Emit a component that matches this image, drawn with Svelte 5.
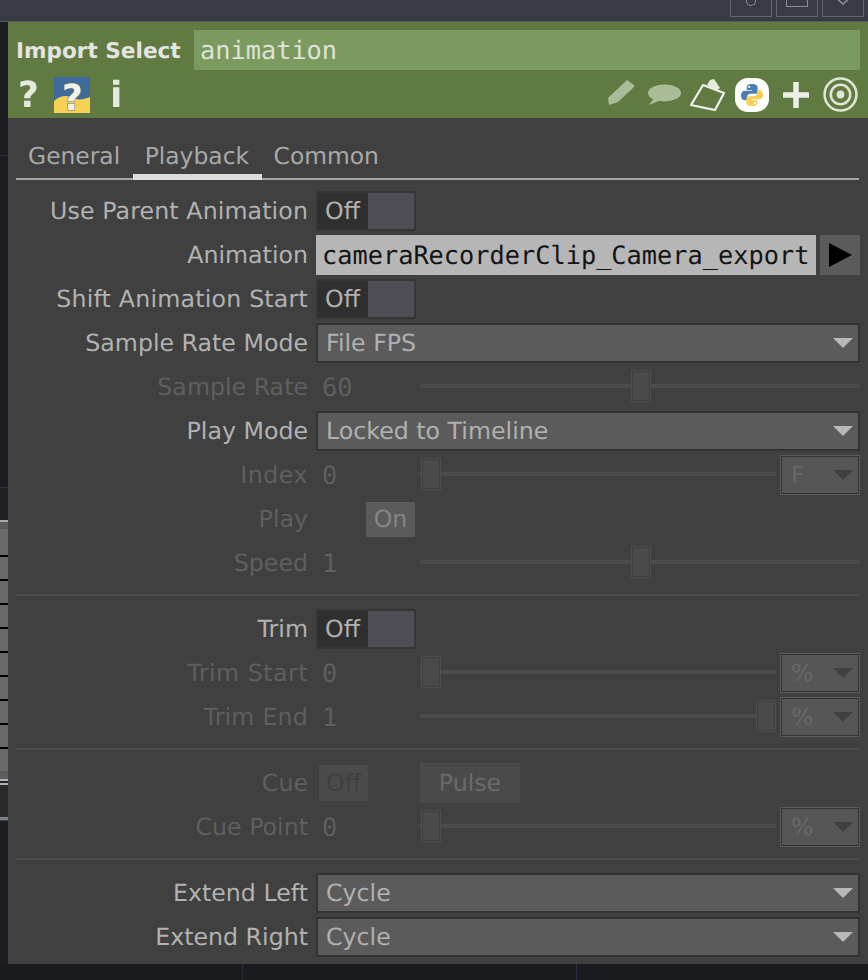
<script>
  const stripRows = Array.from({ length: 10 });
</script>

<div class="page">
  <div class="topbar">
    <div class="winbtn"><span class="glyph-o"></span></div>
    <div class="winbtn"><span class="glyph-sq"></span></div>
    <div class="winbtn">
      <svg width="24" height="12" viewBox="0 0 24 12"><path d="M3 0 L12 8 L21 0" fill="none" stroke="#8b8d99" stroke-width="1.6"/></svg>
    </div>
  </div>

  <div class="middle">
    <div class="strip">
      <div class="strip-dark top"></div>
      <div class="strip-line"></div>
      <div class="strip-dark upper"></div>
      <div class="strip-line"></div>
      <div class="strip-dark lower"></div>
      <div class="strip-light"></div>
      <div class="strip-cap"></div>
      {#each stripRows as _, i}
        <div class="strip-row" class:first={i === 0} class:last={i === 9}></div>
      {/each}
      <div class="strip-cap2"></div>
      <div class="strip-hi"></div>
      <div class="strip-gap"></div>
      <div class="strip-hi"></div>
      <div class="strip-panel"></div>
      <div class="strip-hi2"></div>
      <div class="strip-blue"></div>
    </div>

    <div class="panel">
      <header class="head">
        <div class="title-row">
          <span class="title">Import Select</span>
          <div class="name">animation</div>
        </div>
        <div class="icon-row">
          <div class="icons-left">
            <span class="ico-q">?</span>
            <svg class="ico-help" width="36" height="36" viewBox="0 0 36 36">
              <rect width="36" height="36" fill="#3f6b9c"/>
              <path d="M0 24 C6 18 14 18 20 21 S30 22 36 20 V36 H0 Z" fill="#f6d154"/>
              <text x="18.5" y="32.5" text-anchor="middle" class="help-text">?</text>
            </svg>
            <span class="ico-i">i</span>
          </div>
          <div class="icons-right">
            <svg class="soft lift" width="28" height="26" viewBox="0 0 28 26">
              <path d="M20 1 L27 6 L27 8 L11 23 L2 26 L1 19 Z" fill="#a9bb98"/>
            </svg>
            <svg class="soft m11" width="35" height="22" viewBox="0 0 35 22">
              <ellipse cx="18.5" cy="9" rx="16.5" ry="8.5" fill="#aabd98"/>
              <path d="M8 14 L3 21 L15 16 Z" fill="#aabd98"/>
            </svg>
            <svg class="soft m9" width="35" height="33" viewBox="0 0 35 33">
              <path d="M1 27 L13 7 L34 15 L25 32 Z" fill="none" stroke="#f1f3ec" stroke-width="2.2" stroke-linejoin="round"/>
              <path d="M17 7 L20 2 L24 1 L30 10 L26 13 Z" fill="#e6ead9"/>
            </svg>
            <svg class="m10" width="34" height="34" viewBox="0 0 34 34">
              <rect x="0" y="0" width="34" height="34" rx="13" fill="#fff"/>
              <g transform="translate(2.6 2.6) scale(0.85)">
                <path d="M16.8 4 C11 4 10.8 6.5 10.8 8 V11 H17 V12 H8.6 C6 12 4 14 4 17.4 C4 21 6 23 8.4 23 H11 V19.6 C11 17.4 13 15.6 15 15.6 H20.6 C22.4 15.6 23.6 14.2 23.6 12.4 V8 C23.6 6 21.6 4 16.8 4 Z" fill="#4b7fb0"/>
                <path d="M17.2 30 C23 30 23.2 27.5 23.2 26 V23 H17 V22 H25.4 C28 22 30 20 30 16.6 C30 13 28 11 25.6 11 H23 V14.4 C23 16.6 21 18.4 19 18.4 H13.4 C11.6 18.4 10.4 19.8 10.4 21.6 V26 C10.4 28 12.4 30 17.2 30 Z" fill="#f6d154"/>
                <circle cx="13.6" cy="7.4" r="1.3" fill="#fff"/>
                <circle cx="20.4" cy="26.6" r="1.3" fill="#fff"/>
              </g>
            </svg>
            <svg class="soft m13" width="28" height="28" viewBox="0 0 28 28">
              <path d="M14 1 V27 M1 14 H27" stroke="#ebefe6" stroke-width="5.5"/>
            </svg>
            <svg class="soft m13" width="35" height="35" viewBox="0 0 36 36">
              <circle cx="18" cy="18" r="16.4" fill="none" stroke="#dfe6d6" stroke-width="2.6"/>
              <circle cx="18" cy="18" r="10" fill="none" stroke="#dfe6d6" stroke-width="2.6"/>
              <circle cx="18" cy="18" r="4" fill="#dfe6d6"/>
            </svg>
          </div>
        </div>
      </header>

      <div class="body">
        <nav class="tabs">
          <span class="tab">General</span>
          <span class="tab active">Playback</span>
          <span class="tab">Common</span>
        </nav>

        <div class="params">
          <div class="row"><span class="lab ls-s">Use Parent Animation</span><div class="toggle"><span class="t-off">Off</span><span class="t-on"></span></div></div>
          <div class="row"><span class="lab">Animation</span>
            <div class="field-wrap">
              <div class="field">cameraRecorderClip_Camera_export</div>
              <div class="playbtn"><svg width="23" height="24" viewBox="0 0 23 24"><path d="M0 0 L23 12 L0 24 Z" fill="#000"/></svg></div>
            </div>
          </div>
          <div class="row"><span class="lab ls-m">Shift Animation Start</span><div class="toggle"><span class="t-off">Off</span><span class="t-on"></span></div></div>
          <div class="row"><span class="lab">Sample Rate Mode</span><div class="menu"><span>File FPS</span><i class="arrow"></i></div></div>
          <div class="row off"><span class="lab">Sample Rate</span>
            <div class="num-row"><span class="val">60</span><div class="slider"><b class="thumb mid"></b></div></div>
          </div>
          <div class="row"><span class="lab">Play Mode</span><div class="menu"><span>Locked to Timeline</span><i class="arrow"></i></div></div>
          <div class="row off"><span class="lab ls-l">Index</span>
            <div class="num-row"><span class="val">0</span><div class="slider short"><b class="thumb start"></b></div><div class="unit"><span>F</span><i class="arrow dimarrow"></i></div></div>
          </div>
          <div class="row off"><span class="lab">Play</span><div class="onbtn-wrap"><div class="onbtn">On</div></div></div>
          <div class="row off"><span class="lab">Speed</span>
            <div class="num-row"><span class="val">1</span><div class="slider"><b class="thumb mid"></b></div></div>
          </div>

          <div class="sep"></div>

          <div class="row"><span class="lab">Trim</span><div class="toggle"><span class="t-off">Off</span><span class="t-on"></span></div></div>
          <div class="row off"><span class="lab ls-l">Trim Start</span>
            <div class="num-row"><span class="val">0</span><div class="slider short"><b class="thumb start"></b></div><div class="unit"><span>%</span><i class="arrow dimarrow"></i></div></div>
          </div>
          <div class="row off"><span class="lab ls-m">Trim End</span>
            <div class="num-row"><span class="val">1</span><div class="slider short"><b class="thumb end"></b></div><div class="unit"><span>%</span><i class="arrow dimarrow"></i></div></div>
          </div>

          <div class="sep"></div>

          <div class="row off"><span class="lab">Cue</span>
            <div class="cue"><div class="cue-off">Off</div><div class="pulse">Pulse</div></div>
          </div>
          <div class="row off"><span class="lab">Cue Point</span>
            <div class="num-row"><span class="val">0</span><div class="slider short"><b class="thumb start"></b></div><div class="unit"><span>%</span><i class="arrow dimarrow"></i></div></div>
          </div>

          <div class="sep"></div>

          <div class="row"><span class="lab">Extend Left</span><div class="menu"><span>Cycle</span><i class="arrow"></i></div></div>
          <div class="row"><span class="lab">Extend Right</span><div class="menu"><span>Cycle</span><i class="arrow"></i></div></div>
        </div>
      </div>
    </div>
  </div>
  <div class="bottom"><i></i><i class="violet"></i></div>
</div>

<style>
  :global(body) { margin: 0; background: #1a1b1f; }
  .page { width: 868px; height: 980px; overflow: hidden; display: flex; flex-direction: column; font-family: "DejaVu Sans", sans-serif; text-rendering: geometricPrecision; }

  .topbar { height: 21px; flex: none; background: #383a44; border-bottom: 1px solid #55585c; display: flex; justify-content: flex-end; gap: 4px; padding-right: 4px; align-items: flex-end; }
  .winbtn { width: 40px; height: 17px; margin-bottom: 4px; border: 1px solid #63656f; border-top: 0; display: flex; justify-content: center; align-items: flex-end; overflow: hidden; }
  .glyph-o { width: 8px; height: 14px; border: 1.5px solid #8b8d99; border-top: 0; border-radius: 0 0 6px 6px; margin-bottom: 10px; }
  .glyph-sq { width: 20px; height: 12px; border: 1.5px solid #8b8d99; border-top: 0; margin-bottom: 9px; }
  .winbtn svg { margin-bottom: 8px; }

  .middle { display: flex; flex: none; height: 942px; }
  .strip { width: 8px; flex: none; display: flex; flex-direction: column; background: #1c1d21; }
  .strip-dark { flex: none; }
  .strip-dark.top { height: 133px; }
  .strip-dark.upper { height: 331px; }
  .strip-dark.lower { height: 32px; background: #1f2024; }
  .strip-line { height: 1px; flex: none; background: #2e2f34; }
  .strip-light { height: 2px; background: #a9a9ad; flex: none; }
  .strip-cap { height: 7px; background: #5a5a5a; flex: none; }
  .strip-row { height: 22px; flex: none; background: #6a6a6a; border-bottom: 2px solid #000; }
  .strip-row.first { height: 26px; }
  .strip-row.last { border-bottom: 0; }
  .strip-cap2 { height: 8px; flex: none; background: #5c5c5c; }
  .strip-hi { height: 2px; flex: none; background: #b0b0b8; }
  .strip-gap { height: 2px; flex: none; background: #222226; }
  .strip-panel { height: 32px; flex: none; background: #2a2a2c; }
  .strip-hi2 { height: 3px; flex: none; background: #7e7f8c; }
  .strip-blue { height: 1px; flex: none; background: #3a4450; }

  .panel { flex: 1; display: flex; flex-direction: column; background: #404040; border-right: 1px solid #4a4a4a; }

  .head { height: 96px; flex: none; background: #617a42; padding: 8px 8px 0 8px; box-sizing: border-box; margin-right: -1px; }
  .title-row { display: flex; align-items: center; height: 40px; }
  .title { width: 178px; flex: none; font-weight: 700; font-size: 21.6px; color: #e4e4e0; white-space: nowrap; padding-top: 2px; }
  .name { width: 666px; height: 40px; box-sizing: border-box; background: #7b9a60; color: #dde3d5; font: 25.3px/42px "DejaVu Sans Mono", monospace; padding-left: 6px; }
  .icon-row { display: flex; justify-content: space-between; align-items: center; height: 44px; margin-top: 3px; }
  .icons-left { display: flex; align-items: center; }
  .ico-q, .ico-i { font-weight: 700; color: #e6e9df; filter: blur(0.7px); line-height: 1; padding-top: 2px; }
  .ico-q { font-size: 36px; width: 38px; padding-left: 2px; box-sizing: border-box; }
  .ico-i { font-size: 36px; margin-left: 20px; }
  .ico-help { overflow: visible; filter: blur(0.4px); }
  .help-text { font: 700 36px "DejaVu Sans", sans-serif; fill: #f2f2ec; stroke: #6d7d5d; stroke-width: 1.2px; paint-order: stroke; }
  .icons-right { display: flex; align-items: center; margin-right: 3px; padding-bottom: 1px; }
  .soft { filter: blur(0.6px); }
  .lift { margin-bottom: 6px; }
  .m9 { margin-left: 9px; }
  .m10 { margin-left: 10px; }
  .m11 { margin-left: 11px; }
  .m13 { margin-left: 13px; }

  .body { padding: 8px 8px 0 8px; flex: 1; }
  .tabs { height: 54px; margin-right: 1px; box-sizing: border-box; display: flex; border-bottom: 2px solid #a6a6a6; padding-top: 15px; align-items: flex-start; }
  .tab { font-size: 23.4px; color: #a9a9a9; padding: 0 12.5px 0 12px; height: 39px; line-height: 30px; margin-bottom: -2px; }
  .active { border-bottom: 6px solid #dcdcdc; height: 33px; }

  .params { display: flex; flex-direction: column; padding-top: 9px; }
  .row { height: 44px; flex: none; display: grid; grid-template-columns: 292px 544px; column-gap: 8px; align-items: center; }
  .lab { text-align: right; font-size: 23.7px; color: #b2b2b2; white-space: nowrap; }
  .ls-s { letter-spacing: 0.1px; }
  .ls-m { letter-spacing: 0.2px; }
  .ls-l { letter-spacing: 0.5px; }
  .off .lab { color: #5f5f5f; }
  .sep { height: 2px; margin: 9px 0 11px; flex: none; background: #4c4c4c; }

  .toggle { width: 100px; height: 40px; box-sizing: border-box; border: 2px solid #363636; display: flex; background: #363636; }
  .t-off { width: 50px; background: #2f2f2f; color: #b0b0b0; font-size: 23.7px; line-height: 37px; padding-left: 6px; box-sizing: border-box; border-left: 1px solid #2f2f2f; }
  .t-on { flex: 1; background: #4f4e57; }

  .field-wrap { display: flex; gap: 4px; }
  .field { width: 500px; height: 40px; box-sizing: border-box; background: #b6b6b6; color: #141414; font: 25.3px/41px "DejaVu Sans Mono", monospace; padding-left: 6px; white-space: nowrap; overflow: hidden; }
  .playbtn { width: 40px; height: 40px; background: #5b5b5b; display: flex; align-items: center; justify-content: center; padding-left: 1px; box-sizing: border-box; }

  .menu { height: 40px; box-sizing: border-box; border: 2px solid #333; background: #5b5b5b; display: flex; justify-content: space-between; align-items: center; padding: 0 5px 0 8px; color: #b0b0b0; font-size: 23.7px; }
  .arrow { width: 0; height: 0; border-left: 10px solid transparent; border-right: 10px solid transparent; border-top: 10px solid #b8b8b8; }
  .dimarrow { border-top-color: #404040; }

  .num-row { display: flex; align-items: center; height: 44px; }
  .val { width: 104px; flex: none; box-sizing: border-box; padding-left: 6px; font: 25.3px "DejaVu Sans Mono", monospace; color: #5f5f5f; }
  .slider { flex: 1; height: 4px; margin-bottom: 2px; background: #4c4c4c; position: relative; }
  .slider.short { margin-right: 4px; }
  .thumb { position: absolute; top: -14px; width: 20px; height: 32px; box-sizing: border-box; background: #4a4a4a; border: 2px solid #4e4e4e; outline: 1px solid #3e3e3e; outline-offset: -2px; }
  .thumb.mid { left: 211px; }
  .thumb.start { left: 1px; }
  .thumb.end { right: 0; }
  .unit { width: 80px; height: 40px; flex: none; box-sizing: border-box; border: 2px solid #333; outline: 1px solid #5a5a5a; outline-offset: -1px; background: #565656; display: flex; justify-content: space-between; align-items: center; padding: 0 5px 0 9px; color: #686868; font-size: 23.7px; }

  .onbtn-wrap { display: flex; padding-left: 50px; }
  .onbtn { width: 49px; height: 35px; background: #5b5b5b; color: #858585; font-size: 23.7px; line-height: 35px; text-align: center; }

  .cue { display: flex; align-items: center; }
  .cue-off { width: 49px; height: 36px; margin-left: 3px; background: #4b4b4b; color: #3f3f3f; font-size: 23.7px; line-height: 36px; text-align: center; }
  .pulse { width: 100px; height: 40px; margin-left: 52px; background: #4a4a4a; color: #6a6a6a; font-size: 23.7px; line-height: 40px; text-align: center; }

  .bottom { flex: 1; background: #1a1b1f; display: flex; padding-left: 242px; gap: 333px; }
  .bottom i { width: 1px; background: #2a2b30; }
  .bottom i.violet { background: #2f2d45; }
</style>
